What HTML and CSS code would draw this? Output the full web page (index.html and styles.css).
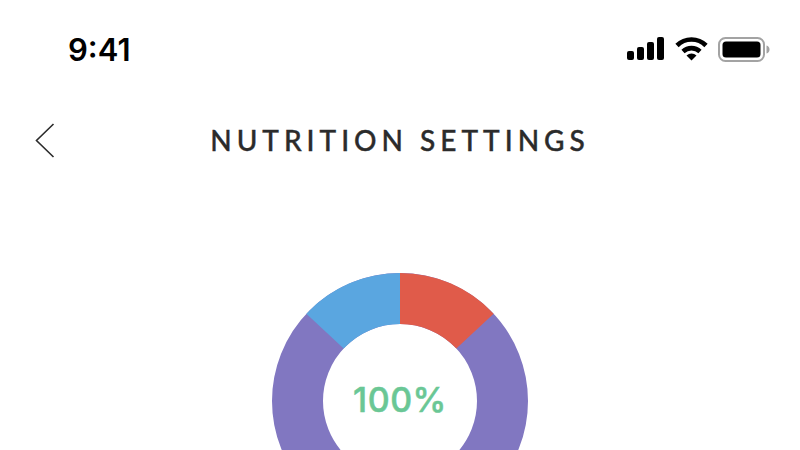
FILE: index.html
```html
<!DOCTYPE html>
<html lang="en">

<head>
    <meta charset="UTF-8">
    <meta name="viewport" content="width=device-width, initial-scale=1.0">
    <title>Nutrition Settings</title>
    <link rel="stylesheet" href="styles.css">
</head>

<body>

    <div class="status-bar">
        <span class="time">9:41</span>
        <div class="status-icons">
            <svg class="signal" width="37" height="23" viewBox="0 0 37 23">
                <rect x="0" y="14" width="7" height="9" rx="2"></rect>
                <rect x="10" y="10" width="7" height="13" rx="2"></rect>
                <rect x="20" y="5" width="7" height="18" rx="2"></rect>
                <rect x="30" y="0" width="7" height="23" rx="2"></rect>
            </svg>
            <svg class="wifi" width="33" height="24" viewBox="0 0 33 24">
                <path d="M2 8.5 C10 0.5 23 0.5 31 8.5" fill="none" stroke="#000" stroke-width="4.6"></path>
                <path d="M8 14.5 C12.8 10 20.2 10 25 14.5" fill="none" stroke="#000" stroke-width="4.6"></path>
                <path d="M11.5 18.5 C14.5 15.8 18.5 15.8 21.5 18.5 L16.5 23.5 Z" fill="#000"></path>
            </svg>
            <svg class="battery" width="52" height="25" viewBox="0 0 52 25">
                <rect x="1" y="1" width="45" height="23" rx="6.5" fill="none" stroke="#a3a3a3" stroke-width="2"></rect>
                <rect x="4.5" y="4.5" width="38" height="16" rx="3.5" fill="#000"></rect>
                <path d="M48.5 8.5 C50.5 9 51.5 10.5 51.5 12.5 C51.5 14.5 50.5 16 48.5 16.5 Z" fill="#a3a3a3"></path>
            </svg>
        </div>
    </div>

    <div class="header">
        <svg class="back" width="20" height="36" viewBox="0 0 20 36">
            <path d="M18.5 1 L1.5 17.5 L18.5 34" fill="none" stroke="#2b2b2b" stroke-width="1.6"></path>
        </svg>
        <h1>NUTRITION SETTINGS</h1>
    </div>

    <div class="chart-clip">
        <div class="chart">
            <!-- circle starts at 12 o'clock after the rotate, lengths are degrees -->
            <svg width="256" height="256" viewBox="0 0 256 256">
                <g class="ring">
                    <circle class="seg-purple" cx="128" cy="128" r="102.5" pathLength="360"></circle>
                    <circle class="seg-red" cx="128" cy="128" r="102.5" pathLength="360" stroke-dasharray="47 313"></circle>
                    <circle class="seg-blue" cx="128" cy="128" r="102.5" pathLength="360" stroke-dasharray="47 313" stroke-dashoffset="47"></circle>
                </g>
            </svg>
            <span class="percent">100%</span>
        </div>
    </div>

</body>

</html>
```

FILE: styles.css
```css
html,
body {
    height: 450px;
    overflow: hidden;
}

body {
    margin: 0;
    background: #fff;
    color: #000;
    font-family: Inter, sans-serif;
}

.status-bar {
    height: 100px;
    box-sizing: border-box;
    padding: 37px 30px 0 68px;
    display: flex;
    justify-content: space-between;
    align-items: flex-start;
}

.time {
    font-size: 31px;
    font-weight: 600;
    line-height: 25px;
}

.status-icons {
    display: flex;
    align-items: flex-start;
    gap: 11px;
}

.wifi {
    margin-right: -1px;
}

.header {
    height: 80px;
    box-sizing: border-box;
    padding: 0 35px;
    position: relative;
    display: flex;
    align-items: center;
    justify-content: center;
}

.back {
    position: absolute;
    left: 35px;
    top: 23px;
}

h1 {
    margin: 0;
    font-family: Lato, sans-serif;
    font-size: 28px;
    font-weight: 500;
    letter-spacing: 5px;
    color: #2b2b2b;
    -webkit-text-stroke: 0.4px #2b2b2b;
}

.chart-clip {
    height: 270px;
    padding-top: 93px;
    box-sizing: border-box;
    overflow: hidden;
}

.chart {
    width: 256px;
    height: 256px;
    margin-left: 272px;
    display: grid;
    place-items: center;
}

.chart svg,
.percent {
    grid-area: 1 / 1;
}

.chart svg {
    display: block;
}

.ring {
    transform: rotate(-90deg);
    transform-origin: 128px 128px;
}

.ring circle {
    fill: none;
    stroke-width: 51;
}

.seg-purple {
    stroke: #8177c1;
}

.seg-red {
    stroke: #e05b4a;
}

.seg-blue {
    stroke: #5aa6e0;
}

.percent {
    font-family: Inter, sans-serif;
    font-size: 34px;
    font-weight: 500;
    color: #6ac795;
    letter-spacing: 0.5px;
    -webkit-text-stroke: 0.5px #6ac795;
    margin-top: -3px;
}
```
